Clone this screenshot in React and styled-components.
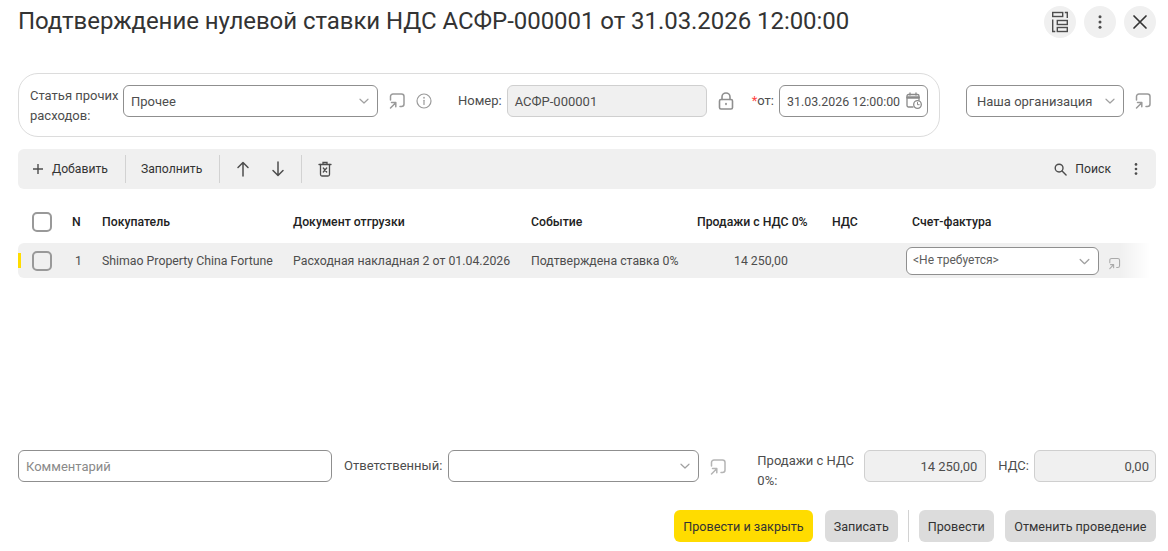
import React from "react";
import styled, { createGlobalStyle } from "styled-components";

const Global = createGlobalStyle`
  html, body { margin: 0; padding: 0; background: #fff; }
  body { font-family: Roboto, "Liberation Sans", sans-serif; color: #333; overflow: hidden; }
  * { box-sizing: border-box; }
`;

const Page = styled.div`
  width: 1168px; height: 551px; padding: 0 12px 0 18px;
  display: flex; flex-direction: column;
`;
const TitleBar = styled.header`
  height: 73px; flex: none; display: flex; justify-content: space-between; align-items: flex-start; padding-top: 6px;
`;
const Title = styled.h1`
  margin: -1px 0 0; font-size: 24px; font-weight: 400; line-height: 32px; color: #333; white-space: nowrap; letter-spacing: -0.05px;
`;
const RoundActions = styled.div`display: flex; gap: 8px;`;
const RoundButton = styled.button`
  width: 32px; height: 32px; border-radius: 50%; border: 0; background: #f0f0f0; padding: 0; color: #4d4d4d;
  display: flex; align-items: center; justify-content: center;
`;
const HeaderRow = styled.div`display: flex; align-items: flex-start; height: 64px; margin-bottom: 12px; flex: none;`;
const GroupPanel = styled.div`
  width: 922px; height: 64px; border: 1px solid #dcdcdc; border-radius: 20px;
  display: flex; align-items: flex-start; padding: 11px 11px 0 11px; flex: none;
`;
const FieldLabel = styled.span`
  font-size: 13px; line-height: 20px; color: #4d4d4d; flex: none; white-space: ${p => p.$wrap ? "normal" : "nowrap"};
  width: ${p => p.$w || "auto"}; margin-left: ${p => p.$ml || 0}; margin-right: ${p => p.$mr || "6px"};
  padding-top: ${p => p.$pt || "6px"};
  strong { color: #f44; font-weight: 400; }
`;
const Input = styled.div`
  width: ${p => p.$w}; height: ${p => p.$h || "32px"}; flex: none;
  border: 1px solid ${p => p.$disabled ? "#cfcfcf" : "#8f8f8f"}; border-radius: 6px;
  background: ${p => p.$disabled ? "#f0f0f0" : "#fff"};
  display: flex; align-items: center; justify-content: ${p => p.$right ? "flex-end" : "space-between"};
  padding: 0 ${p => p.$pr || "7px"} 0 ${p => p.$pl || "7px"};
  font-size: ${p => p.$fs || "13px"}; color: #4d4d4d; white-space: nowrap;
`;
const Placeholder = styled.span`color: #8a8a8a;`;
const SmallValue = styled.span`font-size: 12px; margin-top: -3px; color: #5c5c5c;`;
const IconSlot = styled.span`
  flex: none; display: flex; align-items: center; justify-content: center; color: ${p => p.$c || "#9a9a9a"};
  margin-left: ${p => p.$ml || 0}; margin-top: ${p => p.$mt || 0};
`;
const OrgWrap = styled.div`display: flex; align-items: flex-start; margin-left: 26px; padding-top: 12px;`;
const Toolbar = styled.div`
  height: 40px; background: #f0f0f0; border-radius: 6px; display: flex; align-items: center; padding: 0 12px 0 0; flex: none;
`;
const ToolButton = styled.button`
  border: 0; background: none; padding: 0 ${p => p.$pr || "0"} 0 ${p => p.$pl || "0"}; height: 40px; display: flex; align-items: center; gap: ${p => p.$gap || "6px"};
  font: 400 12.2px Roboto, sans-serif; color: #333;
`;
const ToolSep = styled.span`width: 1px; height: 28px; background: #d2d2d2; flex: none;`;
const Spacer = styled.span`flex: 1;`;
const Table = styled.div`margin-top: 15px; height: 246px; flex: none;`;
const columns = "54px 30px 191px 238px 166px 135px 80px 250px";
const HeadRow = styled.div`
  display: grid; grid-template-columns: ${columns}; height: 39px; padding-bottom: 4px; align-items: center;
  font-size: 12.25px; font-weight: 500; color: #222;
`;
const DataRow = styled.div`
  display: grid; grid-template-columns: ${columns}; height: 35px; align-items: center; position: relative;
  font-size: 12.3px; color: #4d4d4d; border-radius: 6px 0 0 6px;
  background: linear-gradient(to right, #f0f0f0 calc(100% - 36px), #fff calc(100% - 6px));
  &::before { content: ""; position: absolute; left: 0; top: 10px; width: 3px; height: 15px; background: #ffdc00; }
`;
const Cell = styled.div`
  white-space: nowrap; padding-left: ${p => p.$pl || 0};
`;
const CheckCell = styled.div`padding-left: 14px; display: flex;`;
const Check = styled.span`
  width: 20px; height: 20px; border: 2px solid #999; border-radius: 5px; background: ${p => p.$bg || "#fff"}; display: block;
`;
const CellSelect = styled.div`display: flex; align-items: center; margin-left: -6px; padding-top: 1px;`;
const Footer = styled.div`display: flex; align-items: flex-start; height: 60px; flex: none;`;
const Actions = styled.div`display: flex; align-items: center; justify-content: flex-end; height: 32px; flex: none;`;
const ActionButton = styled.button`
  height: 32px; border: 0; border-radius: 6px; padding: 0 ${p => p.$px || "9px"}; margin-left: ${p => p.$ml || "0"};
  background: ${p => p.$primary ? "#ffdc00" : "#dcdcdc"};
  font: 400 12.6px Roboto, sans-serif; color: #333; white-space: nowrap;
`;
const ActionSep = styled.span`width: 1px; height: 32px; background: #d2d2d2; margin: 0 10px 0 10px;`;

const Open = ({ s = 18 }) => (
  <svg width={s} height={s} viewBox="0 0 18 18" fill="none" stroke="currentColor" strokeWidth="1.5" strokeLinecap="round" strokeLinejoin="round">
    <path d="M2.500 8V4.500A2.500 2.500 0 0 1 5 2H13.500A2.500 2.500 0 0 1 16 4.500V12A2.500 2.500 0 0 1 13.500 14.500H12" />
    <path d="M2.500 16L7.500 11M3.500 10.500H7.800V14.800" />
  </svg>
);
const Chevron = ({ c = "#a0a0a0", s = 12 }) => (
  <svg width={s} height={s} viewBox="0 0 12 12" fill="none" stroke={c} strokeWidth="1.200" strokeLinecap="round" strokeLinejoin="round"><path d="M2 4.200L6 8L10 4.200" /></svg>
);
const Info = () => (
  <svg width="16" height="16" viewBox="0 0 16 16" fill="none" stroke="currentColor" strokeWidth="1.200" strokeLinecap="round"><circle cx="8" cy="8" r="7" /><path d="M8 7.300V11.500" /><path d="M8 4.600V4.900" strokeWidth="1.500" /></svg>
);
const Lock = () => (
  <svg width="16" height="18" viewBox="0 0 16 18" fill="none" stroke="currentColor" strokeWidth="1.600" strokeLinecap="round"><rect x="1.500" y="7.500" width="13" height="9.500" rx="1.500" /><path d="M4 7.500V5A4 4 0 0 1 12 5V7.500" /><path d="M8 11.500V12.500" /></svg>
);
const Cal = () => (
  <svg width="16" height="18" viewBox="0 0 16 18" fill="none" stroke="#8a8a8a" strokeWidth="1.300" strokeLinecap="round">
    <path d="M7 15H2.500A1.500 1.500 0 0 1 1 13.500V4A1.500 1.500 0 0 1 2.500 2.500H11.500A1.500 1.500 0 0 1 13 4V8" />
    <path d="M1.500 5.500H12.500" strokeWidth="2.500" /><path d="M4 1V3M10 1V3" />
    <circle cx="11.500" cy="12.500" r="3.800" /><path d="M11.500 10.500V12.700H13.200" strokeWidth="1" />
  </svg>
);
const Structure = () => (
  <svg width="22" height="22" viewBox="0 0 22 22" fill="none" stroke="#4d4d4d" strokeWidth="1.400">
    <rect x="3.700" y="1.500" width="10" height="4" /><rect x="8.300" y="9.500" width="10" height="4" /><rect x="8.300" y="16.500" width="10" height="4" />
    <path d="M15.800 1.500H18.300V7M3.700 8.500V20.500H6.300" />
  </svg>
);
const Dots = ({ s = 18 }) => (
  <svg width={s} height={s} viewBox="0 0 18 18" fill="#4d4d4d"><circle cx="9" cy="3.800" r="1.500" /><circle cx="9" cy="9" r="1.500" /><circle cx="9" cy="14.200" r="1.500" /></svg>
);
const Close = () => (
  <svg width="18" height="18" viewBox="0 0 18 18" fill="none" stroke="#333" strokeWidth="1.700" strokeLinecap="round"><path d="M3 3L15 15M15 3L3 15" /></svg>
);
const Plus = () => (
  <svg width="12" height="12" viewBox="0 0 12 12" fill="none" stroke="#4d4d4d" strokeWidth="1.400"><path d="M6 1V11M1 6H11" /></svg>
);
const Arrow = ({ $down }) => (
  <svg width="14" height="16" viewBox="0 0 14 16" fill="none" stroke="#4d4d4d" strokeWidth="1.500" strokeLinecap="round" strokeLinejoin="round">
    <path d={$down ? "M7 1V14M2 9.500L7 14.500L12 9.500" : "M7 15V2M2 6.500L7 1.500L12 6.500"} />
  </svg>
);
const Trash = () => (
  <svg width="14" height="16" viewBox="0 0 14 16" fill="none" stroke="#4d4d4d" strokeWidth="1.300" strokeLinecap="round"><path d="M1 3.500H13M5 3.500V1.500H9V3.500" /><path d="M2.500 3.500V13.500A1.500 1.500 0 0 0 4 15H10A1.500 1.500 0 0 0 11.500 13.500V3.500" /><path d="M5.300 7L8.700 11M8.700 7L5.300 11" /></svg>
);
const Search = () => (
  <svg width="13" height="13" viewBox="0 0 14 14" fill="none" stroke="#4d4d4d" strokeWidth="1.500" strokeLinecap="round"><circle cx="5.500" cy="5.500" r="4.200" /><path d="M8.700 8.700L13 13" /></svg>
);

export default function App() {
  return (
    <Page>
      <Global />
      <TitleBar>
        <Title>Подтверждение нулевой ставки НДС АСФР-000001 от 31.03.2026 12:00:00</Title>
        <RoundActions>
          <RoundButton><Structure /></RoundButton>
          <RoundButton><Dots /></RoundButton>
          <RoundButton><Close /></RoundButton>
        </RoundActions>
      </TitleBar>
      <HeaderRow>
        <GroupPanel>
          <FieldLabel $wrap $w="91px" $mr="2px" $pt="1px">Статья прочих расходов:</FieldLabel>
          <Input $w="255px">Прочее<Chevron /></Input>
          <IconSlot $ml="10px" $mt="7px"><Open /></IconSlot>
          <IconSlot $ml="10px" $mt="8px"><Info /></IconSlot>
          <FieldLabel $ml="26px" $mr="5px">Номер:</FieldLabel>
          <Input $w="200px" $disabled>АСФР-000001</Input>
          <IconSlot $ml="11px" $mt="7px" $c="#8f8f8f"><Lock /></IconSlot>
          <FieldLabel $ml="18px" $mr="5px"><strong>*</strong>от:</FieldLabel>
          <Input $w="149px" $pr="5px" $fs="12.4px">31.03.2026 12:00:00<Cal /></Input>
        </GroupPanel>
        <OrgWrap>
          <Input $w="158px" $pl="10px">Наша организация<Chevron /></Input>
          <IconSlot $ml="10px" $mt="7px"><Open /></IconSlot>
        </OrgWrap>
      </HeaderRow>
      <Toolbar>
        <ToolButton $gap="8px" $pl="14px" $pr="17px"><Plus />Добавить</ToolButton>
        <ToolSep />
        <ToolButton $pl="15px" $pr="17px">Заполнить</ToolButton>
        <ToolSep />
        <ToolButton $pl="16px" $pr="21px"><Arrow /></ToolButton>
        <ToolButton $pr="16px"><Arrow $down /></ToolButton>
        <ToolSep />
        <ToolButton $pl="16px"><Trash /></ToolButton>
        <Spacer />
        <ToolButton $gap="8px" $pr="17px"><Search />Поиск</ToolButton>
        <Dots s={16} />
      </Toolbar>
      <Table>
        <HeadRow>
          <CheckCell><Check /></CheckCell>
          <Cell>N</Cell>
          <Cell>Покупатель</Cell>
          <Cell>Документ отгрузки</Cell>
          <Cell>Событие</Cell>
          <Cell>Продажи с НДС 0%</Cell>
          <Cell>НДС</Cell>
          <Cell>Счет-фактура</Cell>
        </HeadRow>
        <DataRow>
          <CheckCell><Check $bg="#f0f0f0" /></CheckCell>
          <Cell $pl="3px">1</Cell>
          <Cell>Shimao Property China Fortune</Cell>
          <Cell>Расходная накладная 2 от 01.04.2026</Cell>
          <Cell>Подтверждена ставка 0%</Cell>
          <Cell $pl="37px">14 250,00</Cell>
          <Cell />
          <CellSelect>
            <Input $w="193px" $h="28px" $pl="6px" $pr="7px">
              <SmallValue>&lt;Не требуется&gt;</SmallValue>
              <Chevron s={13} c="#a0a0a0" />
            </Input>
            <IconSlot $ml="9px" $mt="4px" $c="#aaa"><Open s={13} /></IconSlot>
          </CellSelect>
        </DataRow>
      </Table>
      <Footer>
        <Input $w="314px"><Placeholder>Комментарий</Placeholder></Input>
        <FieldLabel $ml="12px">Ответственный:</FieldLabel>
        <Input $w="251px"><span /><Chevron /></Input>
        <IconSlot $ml="10px" $mt="8px" $c="#b5b5b5"><Open /></IconSlot>
        <FieldLabel $wrap $w="103px" $ml="30px" $pt="1px" $mr="4px">Продажи с НДС 0%:</FieldLabel>
        <Input $w="122px" $disabled $right $pr="8px">14 250,00</Input>
        <FieldLabel $ml="12px" $mr="5px">НДС:</FieldLabel>
        <Input $w="122px" $disabled $right $pr="6px">0,00</Input>
      </Footer>
      <Actions>
        <ActionButton $primary>Провести и закрыть</ActionButton>
        <ActionButton $ml="12px">Записать</ActionButton>
        <ActionSep />
        <ActionButton>Провести</ActionButton>
        <ActionButton $ml="11px" $px="9.500px">Отменить проведение</ActionButton>
      </Actions>
    </Page>
  );
}
